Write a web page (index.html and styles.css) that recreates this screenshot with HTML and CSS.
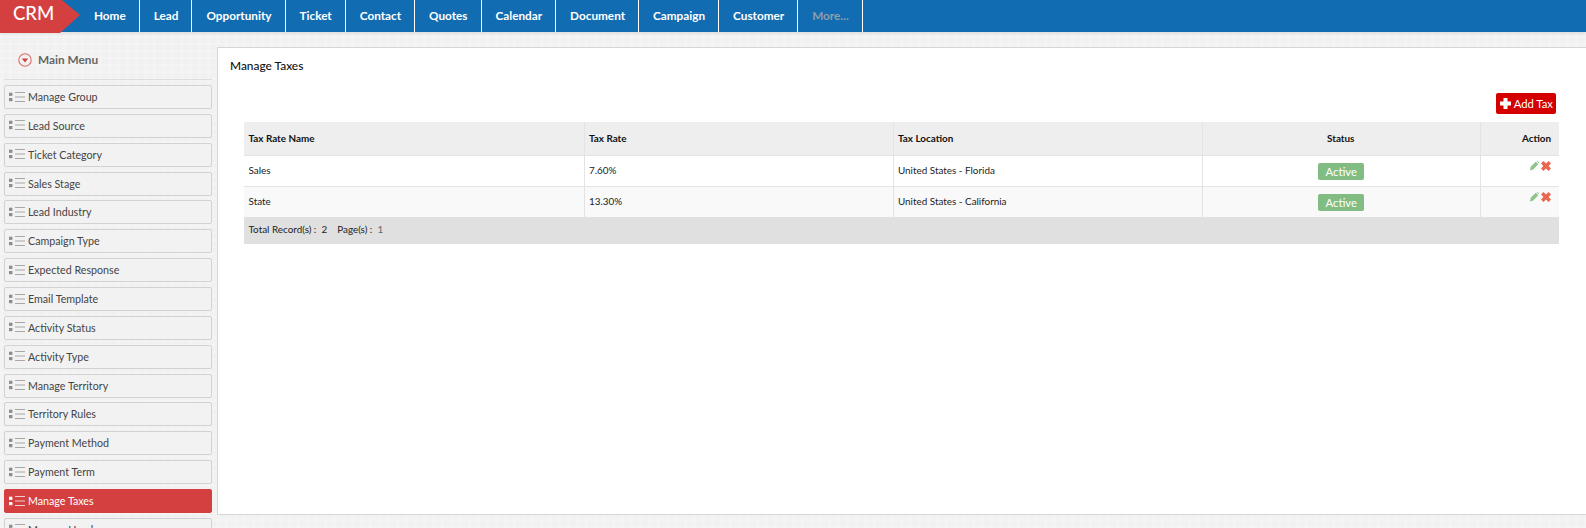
FILE: index.html
```html
<!DOCTYPE html>
<html lang="en">
<head>
  <meta charset="UTF-8">
  <meta name="viewport" content="width=device-width, initial-scale=1.0">
  <title>Manage Taxes</title>
  <link rel="stylesheet" href="styles.css">
</head>
<body>
  <svg class="defs" width="0" height="0">
    <symbol id="list" viewBox="0 0 16 10">
      <rect x="0" y="0.7" width="3.4" height="3.2"/>
      <rect x="0" y="6" width="3.4" height="3.2"/>
      <rect x="6" y="0" width="10" height="1" opacity="0.75"/>
      <rect x="6" y="4.5" width="10" height="1" opacity="0.75"/>
      <rect x="6" y="9" width="10" height="1" opacity="0.75"/>
    </symbol>
    <symbol id="pencil" viewBox="0 0 10 11">
      <path d="M0 11 L0.8 7 L6.4 1.4 L9.2 4.2 L3.6 10 Z M7.2 0.6 Q7.8 0 8.5 0.4 L9.8 1.8 Q10.2 2.5 9.9 3.3 Z"/>
    </symbol>
    <symbol id="cross" viewBox="0 0 10 10">
      <path d="M2.4 0 L5 2.4 L7.6 0 L10 2.4 L7.6 5 L10 7.6 L7.6 10 L5 7.6 L2.4 10 L0 7.6 L2.4 5 L0 2.4 Z"/>
    </symbol>
  </svg>

  <header class="topbar">
    <div class="logo">CRM</div>
    <nav class="topnav">
      <a href="#">Home</a>
      <a href="#">Lead</a>
      <a href="#">Opportunity</a>
      <a href="#">Ticket</a>
      <a href="#">Contact</a>
      <a href="#">Quotes</a>
      <a href="#">Calendar</a>
      <a href="#">Document</a>
      <a href="#">Campaign</a>
      <a href="#">Customer</a>
      <a href="#" class="more">More...</a>
    </nav>
  </header>

  <div class="layout">
    <aside class="sidebar">
      <div class="menu-title">
        <svg class="menu-arrow" width="14" height="14" viewBox="0 0 14 14">
          <circle cx="7" cy="7" r="6.2"/>
          <path d="M3.8 5.6 H10.2 L7 9.4 Z"/>
        </svg>
        Main Menu
      </div>
      <ul class="menu">
        <li><svg class="ico"><use href="#list"/></svg>Manage Group</li>
        <li><svg class="ico"><use href="#list"/></svg>Lead Source</li>
        <li><svg class="ico"><use href="#list"/></svg>Ticket Category</li>
        <li><svg class="ico"><use href="#list"/></svg>Sales Stage</li>
        <li><svg class="ico"><use href="#list"/></svg>Lead Industry</li>
        <li><svg class="ico"><use href="#list"/></svg>Campaign Type</li>
        <li><svg class="ico"><use href="#list"/></svg>Expected Response</li>
        <li><svg class="ico"><use href="#list"/></svg>Email Template</li>
        <li><svg class="ico"><use href="#list"/></svg>Activity Status</li>
        <li><svg class="ico"><use href="#list"/></svg>Activity Type</li>
        <li><svg class="ico"><use href="#list"/></svg>Manage Territory</li>
        <li><svg class="ico"><use href="#list"/></svg>Territory Rules</li>
        <li><svg class="ico"><use href="#list"/></svg>Payment Method</li>
        <li><svg class="ico"><use href="#list"/></svg>Payment Term</li>
        <li class="active"><svg class="ico"><use href="#list"/></svg>Manage Taxes</li>
        <li><svg class="ico"><use href="#list"/></svg>Manage Head</li>
      </ul>
    </aside>

    <main class="panel">
      <h1>Manage Taxes</h1>
      <div class="toolbar">
        <button type="button" class="add-btn">
          <svg width="13" height="13" viewBox="0 0 13 13"><path d="M4.5 1 H8.5 V4.5 H12 V8.5 H8.5 V12 H4.5 V8.5 H1 V4.5 H4.5 Z"/></svg>
          Add Tax
        </button>
      </div>
      <table class="grid">
        <colgroup>
          <col class="col-name">
          <col class="col-rate">
          <col class="col-location">
          <col class="col-status">
          <col>
        </colgroup>
        <thead>
          <tr>
            <th>Tax Rate Name</th>
            <th>Tax Rate</th>
            <th>Tax Location</th>
            <th class="center">Status</th>
            <th class="right">Action</th>
          </tr>
        </thead>
        <tbody>
          <tr>
            <td>Sales</td>
            <td>7.60%</td>
            <td>United States - Florida</td>
            <td class="center"><span class="badge">Active</span></td>
            <td class="right actions"><svg class="edit"><use href="#pencil"/></svg><svg class="del"><use href="#cross"/></svg></td>
          </tr>
          <tr class="alt">
            <td>State</td>
            <td>13.30%</td>
            <td>United States - California</td>
            <td class="center"><span class="badge">Active</span></td>
            <td class="right actions"><svg class="edit"><use href="#pencil"/></svg><svg class="del"><use href="#cross"/></svg></td>
          </tr>
        </tbody>
        <tfoot>
          <tr>
            <td colspan="5">Total Record(s) :&nbsp; 2 &nbsp;&nbsp; Page(s) :&nbsp; <span class="page-no">1</span></td>
          </tr>
        </tfoot>
      </table>
    </main>
  </div>
</body>
</html>
```

FILE: styles.css
```css
html, body {
  height: 100%;
}

body {
  margin: 0;
  overflow: hidden;
  font-family: Lato, "Noto Sans", sans-serif;
  font-size: 11px;
  color: #222;
  background-color: #f1f1f1;
  background-image:
    repeating-linear-gradient(0deg, rgba(255,255,255,0.18) 0 2px, transparent 2px 7px),
    repeating-linear-gradient(90deg, rgba(255,255,255,0.14) 0 3px, transparent 3px 9px);
}

.defs {
  position: absolute;
}

/* top bar */
.topbar {
  display: flex;
  height: 32px;
  background-color: #126cb1;
  box-shadow: 0 2px 2px #dfe1e3;
}

.logo {
  width: 80px;
  height: 33px;
  box-sizing: border-box;
  padding-left: 13px;
  flex-shrink: 0;
  font-size: 18.5px;
  font-weight: 500;
  line-height: 26px;
  color: #fff;
  background-color: #d43f3f;
  clip-path: polygon(0 0, 62px 0, 80px 15px, 60px 33px, 0 33px);
}

.topnav {
  display: flex;
}

.topnav a {
  box-sizing: border-box;
  height: 32px;
  padding: 0 13px 0 14px;
  border-right: 1px solid #fff;
  font-size: 11.75px;
  font-weight: 700;
  line-height: 32px;
  text-decoration: none;
  color: #fff;
}

.topnav a.more {
  color: #8f9dab;
}

/* layout */
.layout {
  display: flex;
  padding-top: 15px;
}

.sidebar {
  width: 208px;
  margin-left: 4px;
  flex-shrink: 0;
}

.menu-title {
  display: flex;
  align-items: center;
  gap: 6px;
  height: 25px;
  padding: 0 0 7px 14px;
  border-bottom: 1px solid #dcdcdc;
  font-size: 11.8px;
  font-weight: 700;
  color: #666;
}

.menu-arrow circle {
  fill: none;
  stroke: #e36a6a;
  stroke-width: 1.1;
}

.menu-arrow path {
  fill: #d43f3f;
}

.menu {
  list-style: none;
  margin: 5px 0 0;
  padding: 0;
}

.menu li {
  display: flex;
  align-items: center;
  box-sizing: border-box;
  height: 24px;
  margin-bottom: 4.86px;
  padding: 0 0 1px 4px;
  border: 1px solid #d2d2d2;
  border-radius: 2px;
  background-color: #f2f2f2;
  font-size: 10.7px;
  color: #444;
}

.menu li.active {
  border-color: #d43f3f;
  background-color: #d43f3f;
  color: #fff;
}

.ico {
  width: 16px;
  height: 10px;
  margin-right: 3px;
  fill: #8d8d8d;
}

.active .ico {
  fill: #fff;
}

/* main panel */
.panel {
  flex: 1;
  box-sizing: border-box;
  height: 468px;
  margin-left: 5px;
  padding: 0 27px 0 26px;
  border: 1px solid #d6d6d6;
  background-color: #fff;
}

h1 {
  margin: 10px 0 0 -14px;
  font-size: 11.9px;
  font-weight: 500;
  line-height: 16px;
  color: #111;
}

.toolbar {
  display: flex;
  justify-content: flex-end;
  margin: 19px 3px 8px 0;
}

.add-btn {
  display: flex;
  align-items: center;
  gap: 2px;
  height: 21px;
  padding: 0 3px;
  border: none;
  border-radius: 2px;
  background-color: #d40000;
  color: #fff;
  font-family: inherit;
  font-size: 11.3px;
}

.add-btn svg {
  fill: #fff;
}

.grid {
  width: 1315px;
  table-layout: fixed;
  border-collapse: collapse;
  font-size: 9.9px;
}

.col-name {
  width: 340px;
}

.col-rate, .col-location {
  width: 309px;
}

.col-status {
  width: 278px;
}

.grid th, .grid td {
  box-sizing: border-box;
  padding: 0 5px 0 4.5px;
  border-right: 1px solid #e3e3e3;
  text-align: left;
  color: #222;
}

.grid th {
  height: 33px;
  border-bottom: 1px solid #e3e3e3;
  background-color: #eee;
  font-weight: 700;
  color: #111;
}

.grid tbody td {
  height: 31px;
  padding-bottom: 1px;
  border-bottom: 1px solid #e3e3e3;
}

.grid tbody tr:last-child td {
  border-bottom: none;
}

.grid th:last-child, .grid td:last-child {
  border-right: none;
}

.grid .alt td {
  background-color: #f9f9f9;
}

.grid .center {
  text-align: center;
}

.grid .right {
  text-align: right;
  padding-right: 8px;
}

.grid tfoot td {
  height: 27px;
  padding-bottom: 3px;
  background-color: #e0e0e0;
  border-right: none;
}

.page-no {
  color: #666;
}

.badge {
  display: inline-block;
  width: 46px;
  height: 17px;
  margin: 2px 0 0 1px;
  border-radius: 2px;
  background-color: #81bd83;
  color: #fff;
  font-size: 11.3px;
  line-height: 17px;
  text-align: center;
  vertical-align: middle;
}

.grid .actions {
  vertical-align: top;
  padding-top: 4px;
  font-size: 0;
}

.edit {
  width: 9px;
  height: 11px;
  margin-right: 2px;
  fill: #8fc38c;
}

.del {
  width: 10px;
  height: 10px;
  fill: #e8674f;
}
```
